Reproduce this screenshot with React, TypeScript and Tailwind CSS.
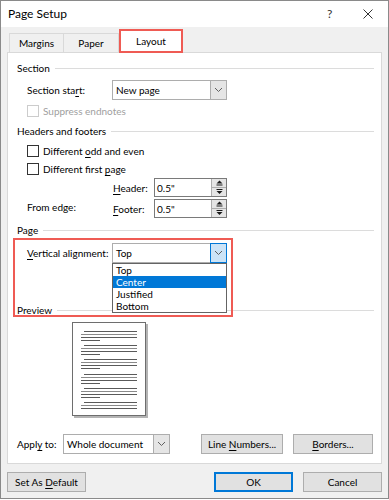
import React from "react";

function U({ children }: { children: React.ReactNode }) {
  return <span className="underline underline-offset-[2px] decoration-[1px]">{children}</span>;
}

function Chevron() {
  return (
    <svg width="9" height="6" viewBox="0 0 9 6">
      <path d="M1 1 L4.5 4.5 L8 1" fill="none" stroke="#606060" strokeWidth="1" />
    </svg>
  );
}

function Select({ value, width, active }: { value: string; width: string; active?: boolean }) {
  return (
    <div className={`${width} h-[20px] flex border border-[#adadad] bg-white`}>
      <div className="flex-1 flex items-center pl-[3px]">{value}</div>
      <div
        className={`flex items-center justify-center ${
          active
            ? "bg-[#cce4f7] border border-[#0078d7] -my-[1px] -mr-[1px] w-[17px]"
            : "w-[16px] bg-[#e5e5e5] border-l border-[#adadad]"
        }`}
      >
        <Chevron />
      </div>
    </div>
  );
}

function Spin({ value }: { value: string }) {
  return (
    <div className="w-[73px] h-[19px] flex border border-[#7a7a7a] bg-white">
      <div className="flex-1 flex items-center pl-[2px]">{value}</div>
      <div className="w-[15px] flex flex-col border-l border-[#adadad] bg-[#e5e5e5]">
        <div className="flex-1 flex items-center justify-center border-b border-[#adadad]">
          <svg width="7" height="6" viewBox="0 0 7 6">
            <path d="M3.5 0.5 L6.5 3.5 L0.5 3.5 Z" fill="#1a1a1a" />
            <rect x="0.5" y="4.5" width="6" height="1" fill="#1a1a1a" />
          </svg>
        </div>
        <div className="flex-1 flex items-center justify-center">
          <svg width="7" height="6" viewBox="0 0 7 6">
            <rect x="0.5" y="0" width="6" height="1" fill="#1a1a1a" />
            <path d="M0.5 2 L6.5 2 L3.5 5 Z" fill="#1a1a1a" />
          </svg>
        </div>
      </div>
    </div>
  );
}

function Check({ label, disabled }: { label: React.ReactNode; disabled?: boolean }) {
  return (
    <div className={`h-[13px] flex items-center gap-[4px] ${disabled ? "text-[#a0a0a0]" : ""}`}>
      <div className={`w-[12px] h-[12px] border bg-white ${disabled ? "border-[#cccccc]" : "border-[#333333]"}`} />
      <span>{label}</span>
    </div>
  );
}

function GroupHeader({ title, className = "" }: { title: string; className?: string }) {
  return (
    <div className={`h-[12px] flex items-center gap-[5px] ${className}`}>
      <span>{title}</span>
      <div className="flex-1 h-px bg-[#dcdcdc]" />
    </div>
  );
}

function Button({ label, width, primary }: { label: React.ReactNode; width: string; primary?: boolean }) {
  return (
    <div
      className={`${width} h-[20px] flex items-center justify-center bg-[#e1e1e1] ${
        primary ? "border-2 border-[#0078d7]" : "border border-[#adadad]"
      }`}
    >
      <span>{label}</span>
    </div>
  );
}

function PreviewPage() {
  const groups = [0, 1, 2, 3, 4, 5];
  return (
    <svg width="78" height="98" viewBox="0 0 78 98">
      <rect x="2" y="2" width="74" height="94" fill="#b4b4b4" />
      <rect x="0.5" y="0.5" width="73" height="93" fill="#ffffff" stroke="#6e6e6e" />
      {groups.map((g) => {
        const y = Math.round(9 + g * 14.2);
        const last = g === 5;
        return (
          <g key={g}>
            <line x1="12" x2="65" y1={y + 0.5} y2={y + 0.5} stroke="#5a5a5a" />
            <line x1="9" x2="65" y1={y + 3.5} y2={y + 3.5} stroke="#8a8a8a" />
            <line x1="9" x2="65" y1={y + 6.5} y2={y + 6.5} stroke="#5a5a5a" />
            {!last && <line x1="9" x2="28" y1={y + 9.5} y2={y + 9.5} stroke="#5a5a5a" />}
          </g>
        );
      })}
    </svg>
  );
}

export default function App() {
  return (
    <div className="w-[389px] h-[500px] bg-white font-['Lato',sans-serif] text-[10px] leading-none text-black whitespace-nowrap">
      <div className="w-[389px] h-[499px] border border-[#8a8a8a] flex flex-col">
        {/* title bar */}
        <div className="h-[26px] bg-white flex items-center pl-[7px] text-[12px]">
          <span className="flex-1">Page Setup</span>
          <span className="w-[36px] text-[12px] text-[#333]">?</span>
          <div className="w-[25px] flex items-center">
            <svg width="10" height="10" viewBox="0 0 10 10">
              <path d="M0.5 0.5 L9.5 9.5 M9.5 0.5 L0.5 9.5" stroke="#333" strokeWidth="1" />
            </svg>
          </div>
        </div>

        <div className="flex-1 bg-[#f0f0f0] px-[6px] flex flex-col">
          {/* tabs */}
          <div className="h-[25px] pt-[2px] flex items-end pl-[2px] relative z-10">
            <div className="w-[55px] h-[19px] flex items-center justify-center border border-b-0 border-[#d9d9d9] bg-[#f0f0f0]">
              Margins
            </div>
            <div className="w-[55px] h-[19px] flex items-center justify-center border border-b-0 border-l-0 border-[#d9d9d9] bg-[#f0f0f0]">
              Paper
            </div>
            <div className="w-[64px] h-[24px] -mb-[1px] flex items-center justify-center border-2 border-[#ef5b54] bg-white">
              Layout
            </div>
          </div>

          {/* panel */}
          <div className="h-[412px] border border-[#d9d9d9] bg-white relative pl-[9px] pr-[7px] flex flex-col">
            <GroupHeader title="Section" className="mt-[9px]" />
            <div className="mt-[6px] flex items-center pl-[10px]">
              <span className="w-[85px]">
                Section sta<U>r</U>t:
              </span>
              <Select value="New page" width="w-[115px]" />
            </div>
            <div className="mt-[4px] pl-[10px]">
              <Check label="Suppress endnotes" disabled />
            </div>

            <GroupHeader title="Headers and footers" className="mt-[8px]" />
            <div className="mt-[7px] pl-[10px]">
              <Check
                label={
                  <>
                    Different <U>o</U>dd and even
                  </>
                }
              />
            </div>
            <div className="mt-[5px] pl-[10px]">
              <Check
                label={
                  <>
                    Different first <U>p</U>age
                  </>
                }
              />
            </div>
            <div className="mt-[3px] flex items-center pl-[10px]">
              <span className="w-[86px] mt-[18px]">From edge:</span>
              <div className="flex flex-col gap-[2px]">
                <div className="flex items-center">
                  <span className="w-[41px]">
                    <U>H</U>eader:
                  </span>
                  <Spin value={'0.5"'} />
                </div>
                <div className="flex items-center">
                  <span className="w-[41px]">
                    <U>F</U>ooter:
                  </span>
                  <Spin value={'0.5"'} />
                </div>
              </div>
            </div>

            <GroupHeader title="Page" className="mt-[6px]" />
            <div className="mt-[7px] flex items-center pl-[10px]">
              <span className="w-[85px]">
                <U>V</U>ertical alignment:
              </span>
              <div className="relative z-20">
                <Select value="Top" width="w-[115px]" active />
                <div className="absolute top-full left-0 w-[115px] border border-[#646464] bg-white">
                  <div className="h-[12px] flex items-center pl-[3px]">Top</div>
                  <div className="h-[12px] flex items-center pl-[3px] bg-[#0078d7] text-white">Center</div>
                  <div className="h-[12px] flex items-center pl-[3px]">Justified</div>
                  <div className="h-[12px] flex items-center pl-[3px]">Bottom</div>
                </div>
              </div>
            </div>

            <GroupHeader title="Preview" className="mt-[41px]" />
            <div className="mt-[6px] pl-[55px]">
              <PreviewPage />
            </div>

            <div className="mt-[14px] flex items-center">
              <span className="w-[46px]">
                Appl<U>y</U> to:
              </span>
              <Select value="Whole document" width="w-[107px]" />
              <div className="ml-[31px]">
                <Button
                  label={
                    <>
                      Line <U>N</U>umbers...
                    </>
                  }
                  width="w-[82px]"
                />
              </div>
              <div className="ml-[10px]">
                <Button
                  label={
                    <>
                      <U>B</U>orders...
                    </>
                  }
                  width="w-[80px]"
                />
              </div>
            </div>

            {/* annotation box */}
            <div className="absolute left-[5px] top-[185px] w-[220px] h-[79px] border-2 border-[#ef5b54] pointer-events-none z-10" />
          </div>

          {/* footer */}
          <div className="mt-[8px] flex items-center">
            <Button
              label={
                <>
                  Set As <U>D</U>efault
                </>
              }
              width="w-[79px]"
            />
            <div className="flex-1" />
            <Button label="OK" width="w-[79px]" primary />
            <div className="ml-[10px]">
              <Button label="Cancel" width="w-[79px]" />
            </div>
          </div>
        </div>
      </div>
    </div>
  );
}
